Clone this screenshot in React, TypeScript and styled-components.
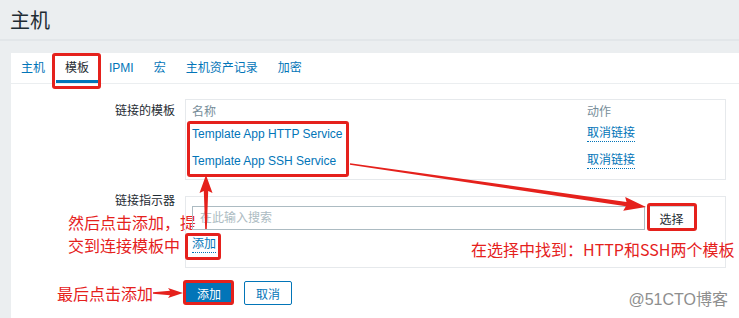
import React from 'react'
import styled, { createGlobalStyle } from 'styled-components'

const RED = '#e5211c'
const BLUE = '#0275b8'
const INK = '#1f2c33'

const GlobalStyle = createGlobalStyle`
  html, body { margin: 0; padding: 0; }
  body {
    background: #ebeef0;
    font-family: "Liberation Sans", Arial, "Noto Sans CJK SC", sans-serif;
    color: ${INK};
  }
`

const Page = styled.div`
  position: relative;
  width: 739px;
  height: 318px;
  overflow: hidden;
  display: flex;
  flex-direction: column;
`

const Header = styled.header`
  height: 41px;
  box-sizing: border-box;
  padding: 9px 10px 0;
  border-bottom: 2px solid #e2e6e9;
`

const Title = styled.h1`
  margin: 0;
  font-size: 20px;
  line-height: 24px;
  font-weight: normal;
  color: ${INK};
`

const Panel = styled.section`
  margin: 12px 0 0 11px;
  flex: 1;
  background: #fff;
`

const TabBar = styled.nav`
  display: flex;
  height: 30px;
  border-bottom: 1px solid #ebeef0;
`

const Tab = styled.span<{ $active?: boolean }>`
  position: relative;
  padding: 0 10px;
  line-height: 30px;
  font-size: 12px;
  color: ${p => (p.$active ? INK : BLUE)};
  &::before {
    content: '';
    display: ${p => (p.$active ? 'block' : 'none')};
    position: absolute;
    left: 1px;
    right: 0;
    bottom: 0;
    height: 3px;
    background: ${BLUE};
  }
`

// red annotation frame drawn over a part of the page
const Mark = styled.span<{ $t: number; $r: number; $b: number; $l: number }>`
  position: relative;
  display: inline-flex;
  &::after {
    content: '';
    position: absolute;
    top: ${p => p.$t}px;
    right: ${p => p.$r}px;
    bottom: ${p => p.$b}px;
    left: ${p => p.$l}px;
    border: 3px solid ${RED};
    border-radius: 3px;
    pointer-events: none;
  }
`

const Form = styled.div`
  padding-top: 15px;
  display: flex;
  flex-direction: column;
`

const FormRow = styled.div<{ $gap?: number }>`
  display: grid;
  grid-template-columns: 164px 541px;
  column-gap: 10px;
  align-items: start;
  margin-bottom: ${p => p.$gap ?? 0}px;
`

const Label = styled.div<{ $top?: number }>`
  position: relative;
  text-align: right;
  font-size: 12px;
  line-height: 14px;
  margin-top: ${p => p.$top ?? 0}px;
  color: ${INK};
  white-space: nowrap;
`

const Box = styled.div<{ $pad: string }>`
  position: relative;
  border: 1px solid #e6e9ec;
  padding: ${p => p.$pad};
`

const TableCols = styled.div`
  display: flex;
`

const Col = styled.div<{ $w?: number }>`
  display: flex;
  flex-direction: column;
  align-items: flex-start;
  width: ${p => (p.$w ? `${p.$w}px` : 'auto')};
`

const HeadCell = styled.div`
  font-size: 12px;
  line-height: 16px;
  color: #768d99;
`

const RowStack = styled.div`
  display: flex;
  flex-direction: column;
`

const Cell = styled.div`
  height: 27px;
  display: flex;
  align-items: center;
  font-size: 12px;
  color: ${BLUE};
  white-space: nowrap;
`

const DotLink = styled.span`
  font-size: 12px;
  line-height: 15px;
  color: ${BLUE};
  border-bottom: 1px dotted ${BLUE};
`

const SearchRow = styled.div`
  display: flex;
  gap: 3px;
`

const SearchInput = styled.div`
  width: 453px;
  height: 24px;
  box-sizing: border-box;
  border: 1px solid #acbbc2;
  padding-left: 7px;
  font-size: 12px;
  line-height: 22px;
  color: #acbbc2;
`

const GreyButton = styled.button`
  width: 47px;
  height: 24px;
  padding: 0;
  border: 1px solid #c9d3d8;
  background: #fff;
  font: inherit;
  font-size: 12px;
  color: ${INK};
`

const LinkLine = styled.div`
  margin-top: 7px;
  display: flex;
`

const Actions = styled.div`
  display: flex;
  gap: 11px;
`

const Button = styled.button<{ $primary?: boolean }>`
  width: 48px;
  height: 24px;
  padding: 0;
  border: 1px solid ${BLUE};
  border-radius: 2px;
  background: ${p => (p.$primary ? BLUE : '#fff')};
  color: ${p => (p.$primary ? '#fff' : BLUE)};
  font: inherit;
  font-size: 12px;
`

const Note = styled.div`
  color: ${RED};
  font-size: 16px;
  line-height: 18px;
  white-space: nowrap;
  font-family: "Noto Sans CJK SC", "Liberation Sans", sans-serif;
`

const FloatNote = styled.div<{ $x: number; $y: number }>`
  position: absolute;
  left: ${p => p.$x}px;
  top: ${p => p.$y}px;
  display: flex;
  flex-direction: column;
  gap: 5px;
  text-align: left;
`

const LastNote = styled(Note)`
  display: flex;
  justify-content: flex-end;
  align-items: center;
  height: 24px;
  margin-right: -8px;
`

const Overlay = styled.svg`
  position: absolute;
  left: 0;
  top: 0;
  pointer-events: none;
`

const Watermark = styled.div`
  position: absolute;
  right: 11px;
  bottom: 8px;
  font-size: 16px;
  line-height: 20px;
  color: #8e8e8e;
  font-family: "Liberation Sans", "Noto Sans CJK SC", sans-serif;
`

function arrow(x1: number, y1: number, x2: number, y2: number, head = 16, hw = 6.5) {
  const dx = x2 - x1
  const dy = y2 - y1
  const len = Math.hypot(dx, dy)
  const ux = dx / len
  const uy = dy / len
  const nx = -uy
  const ny = ux
  const bx = x2 - ux * head
  const by = y2 - uy * head
  const pts: [number, number][] = [
    [x1 + nx * 0.8, y1 + ny * 0.8],
    [bx + nx * 2.2, by + ny * 2.2],
    [bx - ux * 2 + nx * hw, by - uy * 2 + ny * hw],
    [x2, y2],
    [bx - ux * 2 - nx * hw, by - uy * 2 - ny * hw],
    [bx - nx * 2.2, by - ny * 2.2],
    [x1 - nx * 0.8, y1 - ny * 0.8],
  ]
  return pts.map(p => p.map(v => v.toFixed(1)).join(',')).join(' ')
}

const tabs = ['主机', '模板', 'IPMI', '宏', '主机资产记录', '加密']
const templates = ['Template App HTTP Service', 'Template App SSH Service']

export default function App() {
  return (
    <Page>
      <GlobalStyle />
      <Header>
        <Title>主机</Title>
      </Header>
      <Panel>
        <TabBar>
          {tabs.map(t =>
            t === '模板' ? (
              <Mark key={t} $t={0} $r={-2} $b={-6} $l={-3}>
                <Tab $active>{t}</Tab>
              </Mark>
            ) : (
              <Tab key={t}>{t}</Tab>
            )
          )}
        </TabBar>
        <Form>
          <FormRow $gap={16}>
            <Label $top={5}>链接的模板</Label>
            <Box $pad="4px 6px 5px">
              <TableCols>
                <Col $w={395}>
                  <HeadCell>名称</HeadCell>
                  <Mark $t={1} $r={-6} $b={-3} $l={-5}>
                    <RowStack>
                      {templates.map(n => (
                        <Cell key={n}>{n}</Cell>
                      ))}
                    </RowStack>
                  </Mark>
                </Col>
                <Col>
                  <HeadCell>动作</HeadCell>
                  {templates.map(n => (
                    <Cell key={n}>
                      <DotLink>取消链接</DotLink>
                    </Cell>
                  ))}
                </Col>
              </TableCols>
            </Box>
          </FormRow>
          <FormRow $gap={13}>
            <Label $top={-2}>
              链接指示器
              <FloatNote $x={57} $y={19}>
                <Note>然后点击添加，提</Note>
                <Note>交到连接模板中</Note>
              </FloatNote>
            </Label>
            <Box $pad="9px 6px 14px">
              <SearchRow>
                <SearchInput>在此输入搜索</SearchInput>
                <Mark $t={-3} $r={-2} $b={-1} $l={-1}>
                  <GreyButton>选择</GreyButton>
                </Mark>
              </SearchRow>
              <LinkLine>
                <Mark $t={-4} $r={-5} $b={-7} $l={-7}>
                  <DotLink>添加</DotLink>
                </Mark>
              </LinkLine>
              <FloatNote $x={285} $y={43}>
                <Note>在选择中找到：HTTP和SSH两个模板</Note>
              </FloatNote>
            </Box>
          </FormRow>
          <FormRow>
            <LastNote>
              最后点击添加
              <svg width="30" height="24" />
            </LastNote>
            <Actions>
              <Mark $t={-1} $r={-1} $b={0} $l={-2}>
                <Button $primary>添加</Button>
              </Mark>
              <Button>取消</Button>
            </Actions>
          </FormRow>
        </Form>
      </Panel>
      <Overlay width="739" height="318" viewBox="0 0 739 318">
        <polygon fill={RED} points={arrow(206, 229, 206, 175)} />
        <polygon fill={RED} points={arrow(350, 164, 646, 207, 20, 7)} />
        <polygon fill={RED} points={arrow(153, 293, 183, 293, 13, 5)} />
      </Overlay>
      <Watermark>@51CTO博客</Watermark>
    </Page>
  )
}
